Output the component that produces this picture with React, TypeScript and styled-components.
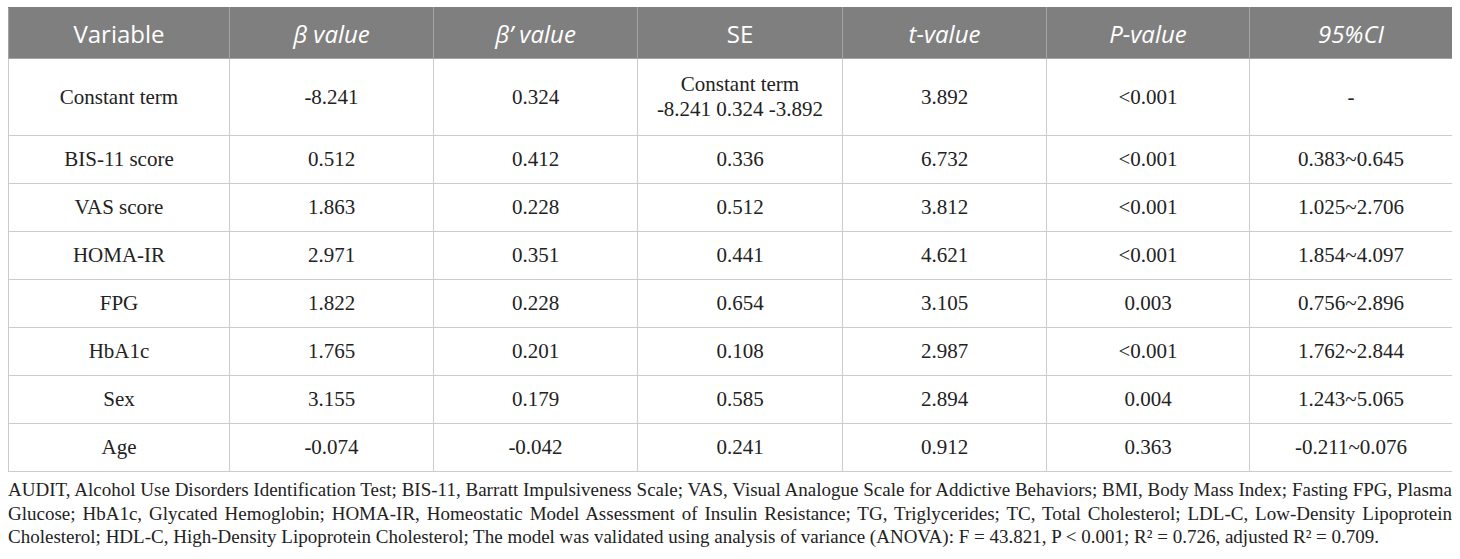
import React from "react";
import styled, { createGlobalStyle } from "styled-components";

const GlobalStyle = createGlobalStyle`
  body {
    margin: 7px 8px;
    background: #ffffff;
    font-family: "Liberation Serif", "Times New Roman", serif;
    color: #222222;
  }
`;

const widths = [221, 204, 204, 205, 204, 203, 203];

const headers: { label: string; italic?: boolean }[] = [
  { label: "Variable" },
  { label: "β value", italic: true },
  { label: "β’ value", italic: true },
  { label: "SE" },
  { label: "t-value", italic: true },
  { label: "P-value", italic: true },
  { label: "95%CI", italic: true },
];

const rows: string[][] = [
  ["BIS-11 score", "0.512", "0.412", "0.336", "6.732", "<0.001", "0.383~0.645"],
  ["VAS score", "1.863", "0.228", "0.512", "3.812", "<0.001", "1.025~2.706"],
  ["HOMA-IR", "2.971", "0.351", "0.441", "4.621", "<0.001", "1.854~4.097"],
  ["FPG", "1.822", "0.228", "0.654", "3.105", "0.003", "0.756~2.896"],
  ["HbA1c", "1.765", "0.201", "0.108", "2.987", "<0.001", "1.762~2.844"],
  ["Sex", "3.155", "0.179", "0.585", "2.894", "0.004", "1.243~5.065"],
  ["Age", "-0.074", "-0.042", "0.241", "0.912", "0.363", "-0.211~0.076"],
];

const Wrapper = styled.div`
  width: 1444px;
`;

const Table = styled.table`
  width: 1444px;
  border-collapse: collapse;
  table-layout: fixed;
`;

const HeadCell = styled.th<{ $italic?: boolean }>`
  height: 50px;
  padding: 0 8px;
  background: #7f7f7f;
  color: #ffffff;
  font-family: "Open Sans", "Noto Sans", sans-serif;
  font-size: 24px;
  font-weight: 400;
  font-style: ${(p) => (p.$italic ? "italic" : "normal")};
  text-align: center;
  border: 1px solid #a3a3a3;
  border-top-color: #7f7f7f;
`;

const Cell = styled.td<{ $tall?: boolean }>`
  height: ${(p) => (p.$tall ? "76px" : "47px")};
  padding: 0 8px;
  font-size: 21px;
  line-height: 25px;
  text-align: center;
  vertical-align: middle;
  border: 1px solid #cccccc;
`;

const Note = styled.div`
  margin-top: 6px;
  font-size: 19px;
  line-height: 23.5px;
`;

const NoteLine = styled.div<{ $last?: boolean }>`
  text-align: justify;
  text-align-last: ${(p) => (p.$last ? "left" : "justify")};
  white-space: nowrap;
`;

export default function App() {
  return (
    <>
      <GlobalStyle />
      <Wrapper>
        <Table>
          <colgroup>
            {widths.map((w, i) => (
              <col key={i} style={{ width: w }} />
            ))}
          </colgroup>
          <thead>
            <tr>
              {headers.map((h) => (
                <HeadCell key={h.label} $italic={h.italic}>
                  {h.label}
                </HeadCell>
              ))}
            </tr>
          </thead>
          <tbody>
            <tr>
              <Cell $tall>Constant term</Cell>
              <Cell $tall>-8.241</Cell>
              <Cell $tall>0.324</Cell>
              <Cell $tall>
                Constant term
                <br />
                -8.241 0.324 -3.892
              </Cell>
              <Cell $tall>3.892</Cell>
              <Cell $tall>&lt;0.001</Cell>
              <Cell $tall>-</Cell>
            </tr>
            {rows.map((r) => (
              <tr key={r[0]}>
                {r.map((v, i) => (
                  <Cell key={i}>{v}</Cell>
                ))}
              </tr>
            ))}
          </tbody>
        </Table>
        <Note>
          <NoteLine>
            AUDIT, Alcohol Use Disorders Identification Test; BIS-11, Barratt Impulsiveness Scale; VAS, Visual Analogue Scale for Addictive Behaviors; BMI, Body Mass Index; Fasting FPG, Plasma
          </NoteLine>
          <NoteLine>
            Glucose; HbA1c, Glycated Hemoglobin; HOMA-IR, Homeostatic Model Assessment of Insulin Resistance; TG, Triglycerides; TC, Total Cholesterol; LDL-C, Low-Density Lipoprotein
          </NoteLine>
          <NoteLine $last>
            Cholesterol; HDL-C, High-Density Lipoprotein Cholesterol; The model was validated using analysis of variance (ANOVA): F = 43.821, P &lt; 0.001; R² = 0.726, adjusted R² = 0.709.
          </NoteLine>
        </Note>
      </Wrapper>
    </>
  );
}
